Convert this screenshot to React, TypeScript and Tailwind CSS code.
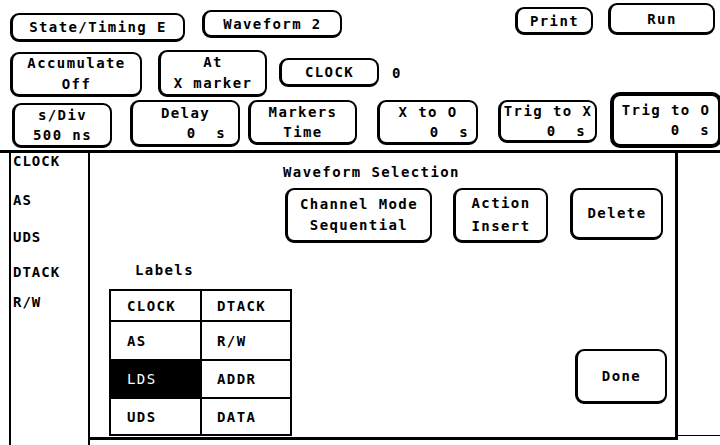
import React from "react";

const btn =
  "shrink-0 flex flex-col items-center justify-center rounded-[9px] border-2 border-b-[3px] border-l-[3px] border-black";

export default function App() {
  return (
    <div className="w-[720px] h-[445px] bg-white overflow-hidden text-black font-['DejaVu_Sans_Mono',monospace] font-bold text-[14px] tracking-[1.4px] leading-none">
      {/* Row 1 */}
      <div className="flex items-start h-[45px]">
        <div className={`${btn} ml-[10px] mt-[13px] w-[175px] h-[29px]`}>State/Timing E</div>
        <div className={`${btn} ml-[17px] mt-[10px] w-[140px] h-[28px]`}>Waveform 2</div>
        <div className={`${btn} ml-[173px] mt-[7px] w-[78px] h-[28px]`}>Print</div>
        <div className={`${btn} ml-[15px] mt-[3px] w-[107px] h-[32px]`}>Run</div>
      </div>

      {/* Row 2 */}
      <div className="flex items-start h-[53px] leading-[21px]">
        <div className={`${btn} ml-[10px] mt-[7px] w-[132px] h-[45px]`}>
          <span>Accumulate</span>
          <span>Off</span>
        </div>
        <div className={`${btn} ml-[16px] mt-[5px] w-[109px] h-[47px]`}>
          <span>At</span>
          <span>X marker</span>
        </div>
        <div className={`${btn} ml-[12px] mt-[13px] w-[100px] h-[29px]`}>CLOCK</div>
        <div className="ml-[13px] mt-[18px]">0</div>
      </div>

      {/* Row 3 */}
      <div className="flex items-start h-[52px] leading-[20px]">
        <div className={`${btn} ml-[12px] mt-[5px] w-[100px] h-[45px]`}>
          <span>s/Div</span>
          <span>500 ns</span>
        </div>
        <div className={`${btn} ml-[18px] mt-[2px] w-[110px] h-[47px]`}>
          <span>Delay</span>
          <span className="self-end pr-[12px] whitespace-pre">0  s</span>
        </div>
        <div className={`${btn} ml-[8px] mt-[2px] w-[109px] h-[45px]`}>
          <span>Markers</span>
          <span>Time</span>
        </div>
        <div className={`${btn} ml-[20px] mt-[2px] w-[101px] h-[45px]`}>
          <span>X to O</span>
          <span className="self-end pr-[7px] whitespace-pre">0  s</span>
        </div>
        <div className={`${btn} ml-[20px] mt-[2px] w-[99px] h-[43px]`}>
          <span>Trig to X</span>
          <span className="self-end pr-[9px] whitespace-pre">0  s</span>
        </div>
        <div className="shrink-0 flex flex-col items-center justify-center rounded-[10px] border-[4px] border-black ml-[13px] mt-[-6px] w-[112px] h-[56px]">
          <span>Trig to O</span>
          <span className="self-end pr-[8px] whitespace-pre">0  s</span>
        </div>
      </div>

      {/* Main area */}
      <div className="flex h-[295px] border-t-[3px] border-black">
        {/* Left label column */}
        <div className="shrink-0 ml-[9px] w-[81px] h-full border-l-2 border-r-2 border-black flex flex-col pl-[2px] leading-[11px] tracking-[1px]">
          <span className="mt-[3px]">CLOCK</span>
          <span className="mt-[28px]">AS</span>
          <span className="mt-[26px]">UDS</span>
          <span className="mt-[24px]">DTACK</span>
          <span className="mt-[19px]">R/W</span>
        </div>

        {/* Dialog */}
        <div className="shrink-0 w-[588px] h-[287px] border-r-[3px] border-b-[3px] border-black flex flex-col">
          <div className="ml-[193px] mt-[14px] leading-[11px]">Waveform Selection</div>
          <div className="flex items-start mt-[10px] leading-[21px]">
            <div className={`${btn} ml-[195px] w-[147px] h-[55px]`}>
              <span>Channel Mode</span>
              <span>Sequential</span>
            </div>
            <div className={`${btn} ml-[21px] w-[95px] h-[55px] leading-[23px]`}>
              <span>Action</span>
              <span>Insert</span>
            </div>
            <div className={`${btn} ml-[22px] w-[93px] h-[52px]`}>Delete</div>
          </div>
          <div className="flex items-start mt-[22px]">
            <div className="flex flex-col ml-[19px]">
              <div className="ml-[26px] leading-[11px]">Labels</div>
              <div className="mt-[13px] grid grid-cols-[91px_88px] grid-rows-[31px_39px_38px_35px] border-2 border-black">
                <div className="flex items-center pl-[16px] border-r-2 border-b-2 border-black">CLOCK</div>
                <div className="flex items-center pl-[15px] border-b-2 border-black">DTACK</div>
                <div className="flex items-center pl-[16px] border-r-2 border-b-2 border-black">AS</div>
                <div className="flex items-center pl-[15px] border-b-2 border-black">R/W</div>
                <div className="flex items-center pl-[16px] border-r-2 border-b-2 border-black bg-black text-white font-normal">LDS</div>
                <div className="flex items-center pl-[15px] border-b-2 border-black">ADDR</div>
                <div className="flex items-center pl-[16px] border-r-2 border-black">UDS</div>
                <div className="flex items-center pl-[15px]">DATA</div>
              </div>
            </div>
            <div className={`${btn} ml-[283px] mt-[84px] w-[92px] h-[55px]`}>Done</div>
          </div>
        </div>

        {/* Right panel */}
        <div className="flex-1 h-[283px] border-b border-black" />
      </div>
    </div>
  );
}
